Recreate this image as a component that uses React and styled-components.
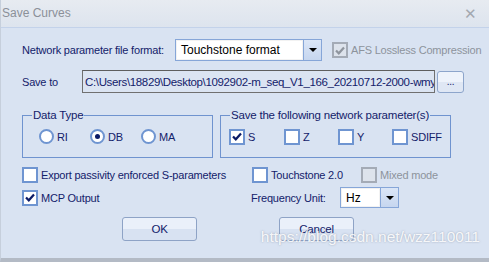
import React from 'react';
import styled, { createGlobalStyle } from 'styled-components';

const Global = createGlobalStyle`
  html, body { margin: 0; padding: 0; }
  body {
    width: 489px;
    height: 262px;
    overflow: hidden;
    font-family: "Liberation Sans", Arial, sans-serif;
  }
`;

//Dialog frame
const Window = styled.div`
  position: relative;
  width: 489px;
  height: 262px;
  box-sizing: border-box;
  background: #d9e3f2;
  border-bottom: 4px solid #b3bac5;
  border-left: 1px solid #c6cfdc;
  color: #13216a;
  font-size: 11px;
  letter-spacing: -0.2px;
  overflow: hidden;
`;
const TitleBar = styled.div`
  height: 28px;
  box-sizing: border-box;
  display: flex;
  align-items: center;
  justify-content: space-between;
  padding: 0 12px 2px 1px;
  background: linear-gradient(#e7ebf1, #dde4ee);
  border-bottom: 1px solid #c3d2ea;
  color: #8b9099;
  font-size: 12px;
  letter-spacing: 0;
`;
const Close = styled.span`
  font-size: 15px;
  color: #a3a8b0;
  margin-top: 3px;
`;
const Body = styled.div`
  padding: 0 0 0 21px;
  display: flex;
  flex-direction: column;
`;
const Row = styled.div`
  display: flex;
  align-items: center;
  height: ${p => p.h || 22}px;
  margin-top: ${p => p.mt || 0}px;
`;
const Label = styled.span`
  width: ${p => (p.w ? `${p.w}px` : 'auto')};
  flex: none;
  white-space: nowrap;
  color: ${p => (p.disabled ? '#8d939c' : '#13216a')};
`;

//Combo box
const Combo = styled.div`
  display: flex;
  width: ${p => p.w}px;
  height: ${p => p.h || 22}px;
  box-sizing: border-box;
  border: 1px solid #86a6d8;
  background: #fff;
  flex: none;
`;
const ComboText = styled.div`
  flex: 1;
  display: flex;
  align-items: center;
  padding-left: 4px;
  color: #000;
  font-size: 12px;
  letter-spacing: 0;
  border: 1px solid #f2f2f2;
`;
const ComboButton = styled.div`
  width: 17px;
  display: flex;
  align-items: center;
  justify-content: center;
  background: linear-gradient(#dbe6f7, #c6d6ef);
  border-left: 1px solid #86a6d8;
  &::after {
    content: '';
    border-left: 4px solid transparent;
    border-right: 4px solid transparent;
    border-top: 4px solid #000;
  }
`;

//Path box
const PathBox = styled.div`
  width: 353px;
  height: 23px;
  box-sizing: border-box;
  border: 1px solid #707070;
  border-top-color: #5e5e5e;
  background: #dbe4f2;
  display: flex;
  align-items: center;
  padding-left: 2px;
  overflow: hidden;
  white-space: nowrap;
  font-size: 11.5px;
  letter-spacing: -0.35px;
  flex: none;
`;
const SmallButton = styled.div`
  width: 27px;
  height: 22px;
  margin-left: 2px;
  box-sizing: border-box;
  border: 1px solid #8da5cb;
  border-radius: 3px;
  background: linear-gradient(#eef3fb 50%, #dfe7f4 50%);
  display: flex;
  align-items: flex-end;
  justify-content: center;
  padding-bottom: 5px;
  font-size: 10px;
  line-height: 1;
`;

//Check boxes and radios
const Box = styled.span`
  width: 16px;
  height: 16px;
  box-sizing: border-box;
  flex: none;
  border: 2px solid ${p => (p.disabled ? '#a4abb6' : '#6f95d1')};
  background: ${p => (p.disabled ? '#dde3ec' : '#fff')};
  display: flex;
  align-items: center;
  justify-content: center;
  margin-right: 3px;
`;
const Round = styled(Box)`
  width: 15px;
  height: 15px;
  border-radius: 50%;
  &::after {
    content: '';
    display: ${p => (p.on ? 'block' : 'none')};
    width: 5px;
    height: 5px;
    border-radius: 50%;
    background: #0b1a66;
  }
`;
const Tick = ({ color }) => (
  <svg width="10" height="9" viewBox="0 0 10 9">
    <path d="M1 4.5 L3.8 7.3 L9 1.5" fill="none" stroke={color} strokeWidth="2.2" />
  </svg>
);
const Check = ({ on, disabled, children, w }) => (
  <Item w={w}>
    <Box disabled={disabled}>{on && <Tick color={disabled ? '#8f959e' : '#0b1a66'} />}</Box>
    <Label disabled={disabled}>{children}</Label>
  </Item>
);
const Radio = ({ on, children }) => (
  <Item w={51}>
    <Round on={on} />
    <Label>{children}</Label>
  </Item>
);
const Item = styled.div`
  display: flex;
  align-items: center;
  width: ${p => (p.w ? `${p.w}px` : 'auto')};
  margin-left: ${p => p.ml || 0}px;
  flex: none;
`;

//Group boxes
const Groups = styled.div`
  display: flex;
  gap: 7px;
  margin-top: 22px;
`;
const Group = styled.div`
  position: relative;
  width: ${p => p.w}px;
  height: 43px;
  box-sizing: border-box;
  border: 1px solid #6f93cf;
  display: flex;
  align-items: center;
  padding: 0 0 0 ${p => p.pl}px;
`;
const Legend = styled.span`
  position: absolute;
  top: -8px;
  left: 9px;
  background: #d9e3f2;
  padding: 0 1px;
  font-size: 11.5px;
  line-height: 14px;
`;

//Push buttons
const Buttons = styled.div`
  display: flex;
  gap: 82px;
  margin: 9px 0 0 100px;
`;
const Button = styled.div`
  width: 75px;
  height: 24px;
  box-sizing: border-box;
  border: 1px solid #8ea3c6;
  border-radius: 3px;
  background: linear-gradient(#eaf0fa 50%, #d8e2f2 50%);
  display: flex;
  align-items: center;
  justify-content: center;
  font-size: 11.5px;
`;
const Watermark = styled.div`
  position: absolute;
  right: 9px;
  bottom: 12px;
  font-size: 15.5px;
  letter-spacing: 0;
  color: rgba(255, 255, 255, 0.9);
  text-shadow: 0 0 2px rgba(100, 110, 130, 0.55);
`;

const App = () => (
  <Window>
    <Global />
    <TitleBar>
      <span>Save Curves</span>
      <Close>✕</Close>
    </TitleBar>
    <Body>
      <Row mt={11}>
        <Label w={153}>Network parameter file format:</Label>
        <Combo w={147}>
          <ComboText>Touchstone format</ComboText>
          <ComboButton />
        </Combo>
        <Item ml={10}>
          <Check on disabled>AFS Lossless Compression</Check>
        </Item>
      </Row>
      <Row mt={9} h={23}>
        <Label w={60}>Save to</Label>
        <PathBox>C:\Users\18829\Desktop\1092902-m_seq_V1_166_20210712-2000-wmy</PathBox>
        <SmallButton>...</SmallButton>
      </Row>
      <Groups>
        <Group w={191} pl={16}>
          <Legend>Data Type</Legend>
          <Radio>RI</Radio>
          <Radio on>DB</Radio>
          <Radio>MA</Radio>
        </Group>
        <Group w={231} pl={8}>
          <Legend>Save the following network parameter(s)</Legend>
          <Check on w={55}>S</Check>
          <Check w={54}>Z</Check>
          <Check w={54}>Y</Check>
          <Check>SDIFF</Check>
        </Group>
      </Groups>
      <Row mt={8} h={18}>
        <Check w={230}>Export passivity enforced S-parameters</Check>
        <Check w={109}>Touchstone 2.0</Check>
        <Check disabled>Mixed mode</Check>
      </Row>
      <Row mt={3} h={21}>
        <Check on w={229}>MCP Output</Check>
        <Label w={89}>Frequency Unit:</Label>
        <Combo w={59} h={21}>
          <ComboText>Hz</ComboText>
          <ComboButton />
        </Combo>
      </Row>
      <Buttons>
        <Button>OK</Button>
        <Button>Cancel</Button>
      </Buttons>
    </Body>
    <Watermark>https://blog.csdn.net/wzz110011</Watermark>
  </Window>
);

export default App;
